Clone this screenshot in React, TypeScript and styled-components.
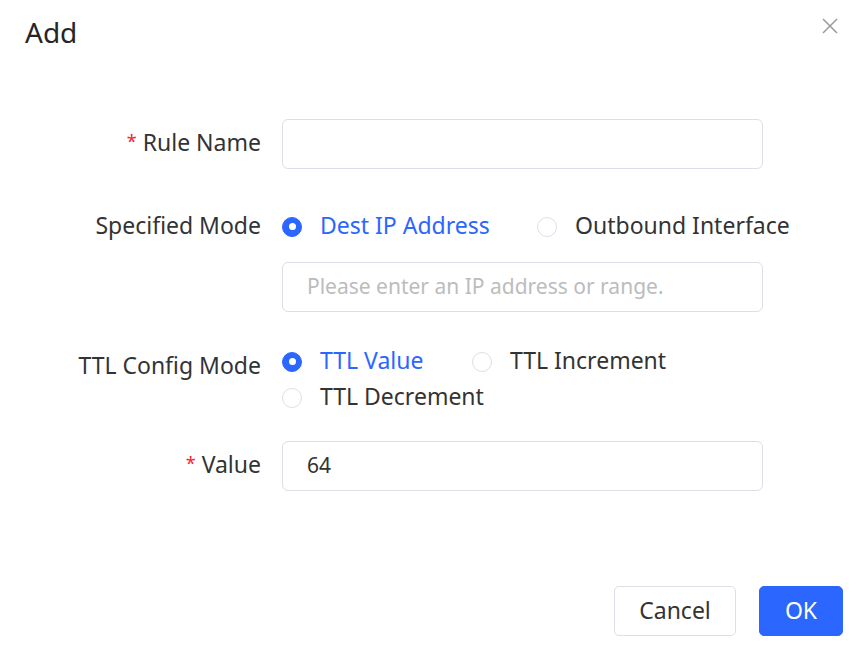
import React, { useState } from 'react';
import styled, { createGlobalStyle } from 'styled-components';

const GlobalStyle = createGlobalStyle`
  html, body {
    margin: 0;
    padding: 0;
    background: #fff;
  }
  body {
    font-family: "Noto Sans", "Open Sans", sans-serif;
    color: #333;
  }
`

const Dialog = styled.div`
  width: 863px;
  height: 648px;
  display: flex;
  flex-direction: column;
  background: #fff;
  box-sizing: border-box;
`

const Header = styled.header`
  display: flex;
  justify-content: space-between;
  align-items: flex-start;
  padding: 14px 24px 0 25px;
  height: 119px;
  box-sizing: border-box;
`

const Title = styled.h2`
  margin: 0;
  font-size: 28px;
  font-weight: 400;
  line-height: 36px;
  color: #262626;
`

const CloseButton = styled.button`
  border: none;
  background: none;
  padding: 0;
  margin-top: 3px;
  width: 18px;
  height: 18px;
  cursor: pointer;
  color: #9a9a9a;
`

const Form = styled.div`
  flex: 1;
  display: flex;
  flex-direction: column;
`

const Row = styled.div<{ $top?: number }>`
  display: grid;
  grid-template-columns: 261px 481px;
  column-gap: 21px;
  margin-top: ${p => p.$top || 0}px;
`

const Label = styled.label<{ $line: number; $offset?: number }>`
  text-align: right;
  font-size: 23px;
  line-height: ${p => p.$line}px;
  padding-top: ${p => p.$offset || 0}px;
  color: #333;
  white-space: nowrap;
`

const Star = styled.span`
  color: #f5222d;
  font-size: 18px;
  margin-right: 6px;
  vertical-align: 3px;
`

const Input = styled.input<{ $top?: number }>`
  width: 481px;
  height: 50px;
  box-sizing: border-box;
  border: 1px solid #dcdfe6;
  border-radius: 6px;
  padding: 0 24px 3px;
  font-family: inherit;
  font-size: 21px;
  color: #333;
  margin-top: ${p => p.$top || 0}px;
  outline: none;
  &::placeholder {
    color: #bcbcbc;
  }
`

const Control = styled.div`
  display: flex;
  flex-direction: column;
`

const RadioGroup = styled.div<{ $line: number; $wrap?: boolean }>`
  display: flex;
  flex-wrap: ${p => (p.$wrap ? 'wrap' : 'nowrap')};
  line-height: ${p => p.$line}px;
`

const RadioItem = styled.label<{ $checked: boolean; $width?: number }>`
  display: inline-flex;
  align-items: center;
  gap: 18px;
  font-size: 23px;
  color: ${p => (p.$checked ? '#2b66ff' : '#333')};
  width: ${p => (p.$width ? `${p.$width}px` : 'auto')};
  flex-shrink: 0;
  cursor: pointer;
  white-space: nowrap;
`

const RadioDot = styled.span<{ $checked: boolean }>`
  width: 20px;
  height: 20px;
  margin-top: 3px;
  border-radius: 50%;
  box-sizing: border-box;
  background: ${p => (p.$checked ? '#2b66ff' : '#fff')};
  border: 1px solid ${p => (p.$checked ? '#2b66ff' : '#dcdfe6')};
  display: flex;
  align-items: center;
  justify-content: center;
  &::after {
    content: '';
    width: 7px;
    height: 7px;
    border-radius: 50%;
    background: #fff;
    display: ${p => (p.$checked ? 'block' : 'none')};
  }
`

const Footer = styled.footer`
  display: flex;
  justify-content: flex-end;
  gap: 23px;
  padding: 0 20px 12px 0;
`

const Button = styled.button<{ $primary?: boolean }>`
  height: 50px;
  padding: 0 0 3px;
  width: ${p => (p.$primary ? 84 : 122)}px;
  border-radius: 5px;
  font-family: inherit;
  font-size: 23px;
  border: 1px solid ${p => (p.$primary ? '#2b66ff' : '#dcdfe6')};
  background: ${p => (p.$primary ? '#2b66ff' : '#fff')};
  color: ${p => (p.$primary ? '#fff' : '#333')};
  cursor: pointer;
`

function Radio({ label, checked, width, onClick }: { label: string; checked: boolean; width?: number; onClick: () => void }) {
  return (
    <RadioItem $checked={checked} $width={width} onClick={onClick}>
      <RadioDot $checked={checked} />
      {label}
    </RadioItem>
  );
}

export default function App() {
  const [mode, setMode] = useState('ip');
  const [ttl, setTtl] = useState('value');

  return (
    <>
      <GlobalStyle />
      <Dialog>
        <Header>
          <Title>Add</Title>
          <CloseButton aria-label="close">
            <svg width="18" height="18" viewBox="0 0 18 18">
              <path d="M2 2 L16 16 M16 2 L2 16" stroke="currentColor" strokeWidth="1.5" fill="none" />
            </svg>
          </CloseButton>
        </Header>
        <Form>
          <Row>
            <Label $line={44}><Star>*</Star>Rule Name</Label>
            <Input />
          </Row>
          <Row $top={42}>
            <Label $line={28}>Specified Mode</Label>
            <Control>
              <RadioGroup $line={28}>
                <Radio label="Dest IP Address" width={255} checked={mode === 'ip'} onClick={() => setMode('ip')} />
                <Radio label="Outbound Interface" checked={mode === 'if'} onClick={() => setMode('if')} />
              </RadioGroup>
              <Input $top={23} placeholder="Please enter an IP address or range." />
            </Control>
          </Row>
          <Row $top={30}>
            <Label $line={34} $offset={6}>TTL Config Mode</Label>
            <RadioGroup $line={36} $wrap>
              <Radio label="TTL Value" width={190} checked={ttl === 'value'} onClick={() => setTtl('value')} />
              <Radio label="TTL Increment" width={240} checked={ttl === 'inc'} onClick={() => setTtl('inc')} />
              <Radio label="TTL Decrement" checked={ttl === 'dec'} onClick={() => setTtl('dec')} />
            </RadioGroup>
          </Row>
          <Row $top={27}>
            <Label $line={44}><Star>*</Star>Value</Label>
            <Input defaultValue="64" />
          </Row>
        </Form>
        <Footer>
          <Button>Cancel</Button>
          <Button $primary>OK</Button>
        </Footer>
      </Dialog>
    </>
  );
}
